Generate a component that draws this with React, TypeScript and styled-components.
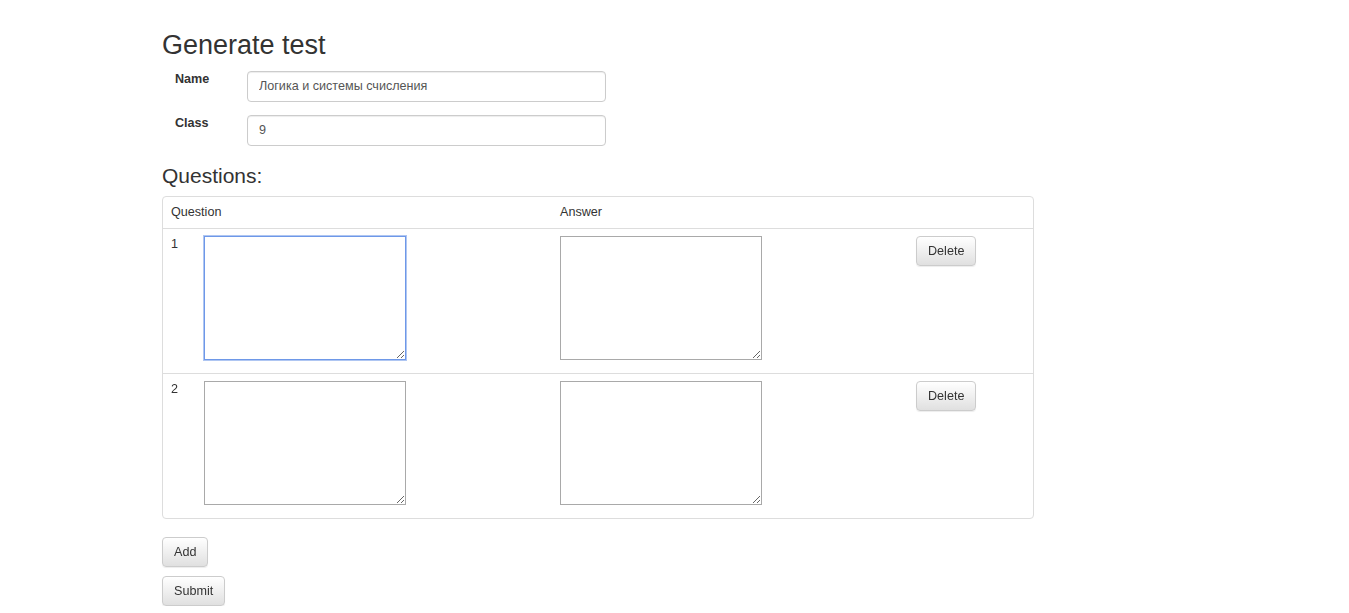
import React from "react";
import styled, { createGlobalStyle } from "styled-components";

const Global = createGlobalStyle`
  html, body { margin: 0; padding: 0; background: #fff; }
  body {
    font-family: "Liberation Sans", Arial, Helvetica, sans-serif;
    font-size: 12.6px;
    line-height: 18px;
    color: #333;
  }
  * { box-sizing: border-box; }
`;

const Container = styled.div`
  width: 1025px;
  margin: 0 auto;
`;

const Title = styled.h2`
  margin: 30px 0 0;
  font-size: 27px;
  line-height: 30px;
  font-weight: 400;
  color: #333;
`;

const SubTitle = styled.h3`
  margin: 18px 0 9px;
  font-size: 21px;
  line-height: 23px;
  font-weight: 400;
  color: #333;
`;

const FormRow = styled.div<{ $first?: boolean }>`
  display: flex;
  align-items: flex-start;
  margin-top: ${(p) => (p.$first ? 11 : 13)}px;
`;

const Label = styled.label`
  width: 85px;
  padding-left: 13px;
  margin-top: -1px;
  font-weight: 700;
  line-height: 18px;
`;

const Input = styled.input`
  width: 359px;
  height: 31px;
  padding: 4px 11px 6px;
  font-family: inherit;
  font-size: 12.6px;
  color: #555;
  border: 1px solid #ccc;
  border-radius: 4px;
  box-shadow: inset 0 1px 1px rgba(0, 0, 0, 0.075);
  background: #fff;
  outline: none;
`;

const Table = styled.div`
  width: 872px;
  border: 1px solid #ddd;
  border-radius: 4px;
`;

const Row = styled.div<{ $last?: boolean }>`
  display: grid;
  grid-template-columns: 389px 356px 1fr;
  border-bottom: ${(p) => (p.$last ? "none" : "1px solid #ddd")};
`;

const HeadCell = styled.div`
  padding: 7px 8px;
  line-height: 17px;
`;

const Cell = styled.div`
  padding: 7px 8px 13px;
  display: flex;
  align-items: flex-start;
`;

const Num = styled.span`
  width: 33px;
  line-height: 17px;
`;

const Area = styled.textarea<{ $focused?: boolean }>`
  display: block;
  width: 202px;
  height: 124px;
  margin: 0;
  padding: 2px;
  font-family: inherit;
  font-size: 12.6px;
  border: 1px solid ${(p) => (p.$focused ? "#6e98e8" : "#a9a9a9")};
  box-shadow: ${(p) => (p.$focused ? "0 0 0 1px rgba(110, 152, 232, 0.55)" : "none")};
  border-radius: 0;
  outline: none;
  background: #fff;
`;

const Button = styled.button`
  display: block;
  height: 30px;
  padding: 5px 11px;
  font-family: inherit;
  font-size: 12.6px;
  line-height: 18px;
  color: #333;
  background: linear-gradient(to bottom, #ffffff 0%, #e0e0e0 100%);
  border: 1px solid #ccc;
  border-radius: 4px;
  box-shadow: inset 0 1px 0 rgba(255, 255, 255, 0.15), 0 1px 1px rgba(0, 0, 0, 0.075);
  cursor: pointer;
`;

const Actions = styled.div`
  display: flex;
  flex-direction: column;
  align-items: flex-start;
  gap: 9px;
  margin-top: 18px;
`;

const ButtonCell = styled.div`
  padding: 7px 8px 13px;
`;

const rows = [1, 2];

export default function App() {
  return (
    <>
      <Global />
      <Container>
        <Title>Generate test</Title>
        <FormRow $first>
          <Label>Name</Label>
          <Input defaultValue="Логика и системы счисления" />
        </FormRow>
        <FormRow>
          <Label>Class</Label>
          <Input defaultValue="9" />
        </FormRow>
        <SubTitle>Questions:</SubTitle>
        <Table>
          <Row>
            <HeadCell>Question</HeadCell>
            <HeadCell>Answer</HeadCell>
            <HeadCell />
          </Row>
          {rows.map((n, i) => (
            <Row key={n} $last={i === rows.length - 1}>
              <Cell>
                <Num>{n}</Num>
                <Area $focused={i === 0} autoFocus={i === 0} />
              </Cell>
              <Cell>
                <Area />
              </Cell>
              <ButtonCell>
                <Button>Delete</Button>
              </ButtonCell>
            </Row>
          ))}
        </Table>
        <Actions>
          <Button>Add</Button>
          <Button>Submit</Button>
        </Actions>
      </Container>
    </>
  );
}
